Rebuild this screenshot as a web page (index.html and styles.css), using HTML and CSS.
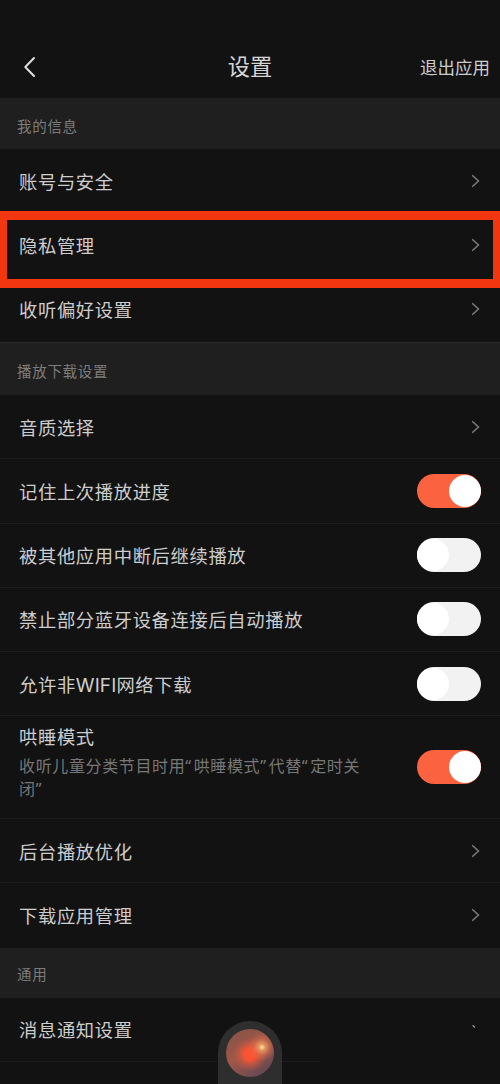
FILE: index.html
```html
<!DOCTYPE html>
<html lang="zh-CN">
<head>
<meta charset="utf-8">
<title>设置</title>
<link rel="stylesheet" href="styles.css">
</head>
<body>
<svg class="defs" width="0" height="0"><symbol id="go" viewBox="0 0 10 14"><path d="M1.2 1.2 7.5 7 1.2 12.8" fill="none" stroke="currentColor" stroke-width="1.4"/></symbol></svg>
<div class="screen">
  <header class="header">
    <svg class="back" viewBox="0 0 14 22"><path d="M11 2 2.3 11 11 20" fill="none" stroke="currentColor" stroke-width="2" stroke-linecap="round" stroke-linejoin="round"/></svg>
    <h1 class="title">设置</h1>
    <span class="exit">退出应用</span>
  </header>
  <h2 class="section s1">我的信息</h2>
  <div class="row plain">账号与安全<svg class="go"><use href="#go"/></svg></div>
  <div class="row plain marked">隐私管理<svg class="go"><use href="#go"/></svg><i class="highlight"></i></div>
  <div class="row plain">收听偏好设置<svg class="go"><use href="#go"/></svg></div>
  <h2 class="section s2">播放下载设置</h2>
  <div class="row">音质选择<svg class="go"><use href="#go"/></svg></div>
  <div class="row">记住上次播放进度<span class="switch on"></span></div>
  <div class="row">被其他应用中断后继续播放<span class="switch"></span></div>
  <div class="row">禁止部分蓝牙设备连接后自动播放<span class="switch"></span></div>
  <div class="row"><span>允许非<span class="latin">WIFI</span>网络下载</span><span class="switch"></span></div>
  <div class="row tall"><div class="stack">哄睡模式<p class="desc">收听儿童分类节目时用<span class="q">“</span>哄睡模式<span class="q">”</span>代替<span class="q">“</span>定时关<br>闭<span class="q">”</span></p></div><span class="switch on"></span></div>
  <div class="row">后台播放优化<svg class="go"><use href="#go"/></svg></div>
  <div class="row plain">下载应用管理<svg class="go"><use href="#go"/></svg></div>
  <h2 class="section s3">通用</h2>
  <div class="row last">消息通知设置<svg class="speck" viewBox="0 0 4 3"><path d="M.5.3 3 2.5" stroke="currentColor" stroke-width="1.2"/></svg></div>
  <div class="player"><div class="cover"></div></div>
</div>
</body>
</html>
```
FILE: styles.css
```css
* { box-sizing: border-box; }
body { margin: 0; background: #121212; }
.defs { position: absolute; }
.screen {
  position: relative;
  display: flex;
  flex-direction: column;
  width: 500px;
  height: 1084px;
  overflow: hidden;
  background: #121212;
  color: #cdcdcd;
  font-family: "Noto Sans CJK SC", sans-serif;
  font-size: 18.3px;
  letter-spacing: .66px;
}
.screen > * { flex-shrink: 0; }
.header {
  display: grid;
  grid-template-columns: 1fr auto 1fr;
  align-items: center;
  height: 98px;
  padding: 35px 10px 0 23px;
}
.back { width: 14px; height: 22px; color: #dedede; }
.title { margin: 0 13px 3px 0; font-size: 22.3px; line-height: 32px; font-weight: 400; letter-spacing: 0; color: #d6d6d6; }
.exit { justify-self: end; font-size: 17.5px; letter-spacing: 0; }
.section {
  display: flex;
  align-items: center;
  margin: 0;
  padding: 3px 17px 0;
  background: #1f1f1f;
  color: #7c7c7c;
  font-size: 14.5px;
  font-weight: 400;
  letter-spacing: .7px;
}
.s1 { height: 51px; }
.s2 { height: 53px; padding-top: 2px; border-top: 1px solid #292929; }
.s3 { height: 50px; padding-top: 2px; }
.row {
  display: flex;
  align-items: center;
  justify-content: space-between;
  height: 64.2px;
  padding: 0 19px;
  border-bottom: 1px solid #1d1d1d;
  line-height: 26px;
}
.plain { height: 64.4px; border-bottom-color: transparent; }
.tall { height: 103px; }
.stack { margin-top: -11px; }
.desc { margin: 5px 0 0; font-size: 16px; line-height: 22px; letter-spacing: .63px; color: #777; }
.q { font-family: "Noto Sans", sans-serif; letter-spacing: 2.6px; }
.latin { font-family: Inter, sans-serif; font-size: 19px; letter-spacing: .1px; line-height: 1; }
.go { width: 10px; height: 14px; color: #808080; }
.switch {
  display: flex;
  width: 64px;
  height: 34px;
  padding: 1px 0;
  border-radius: 17px;
  background: #f2f2f2;
}
.switch::before { content: ""; width: 32px; height: 32px; border-radius: 50%; background: #fff; }
.on { justify-content: flex-end; background: #fb6340; }
.marked { position: relative; }
.highlight {
  position: absolute;
  left: 0;
  top: -2.4px;
  width: 500px;
  height: 77px;
  border: solid #f2360f;
  border-width: 9px 7px;
}
.last { height: 64px; margin-right: 180px; padding-right: 0; position: relative; }
.speck { position: absolute; left: 472px; top: 27px; width: 4px; height: 3px; color: #999; }
.player {
  position: absolute;
  left: 218px;
  top: 1021px;
  width: 64px;
  height: 64px;
  padding: 8px;
  border-radius: 32px 32px 0 0;
  background: #2e2e2e;
}
.cover {
  width: 48px;
  height: 48px;
  border-radius: 50%;
  background:
    radial-gradient(circle at 75% 38%, #ffe5a0 0, #f4a263cc 7%, #e9734c66 18%, transparent 30%),
    radial-gradient(circle at 50% 53%, #fa5433 0, #f85332 16%, #dd58408c 30%, transparent 48%),
    linear-gradient(145deg, #865448 10%, #a05748 45%, #684951 85%);
}
```
